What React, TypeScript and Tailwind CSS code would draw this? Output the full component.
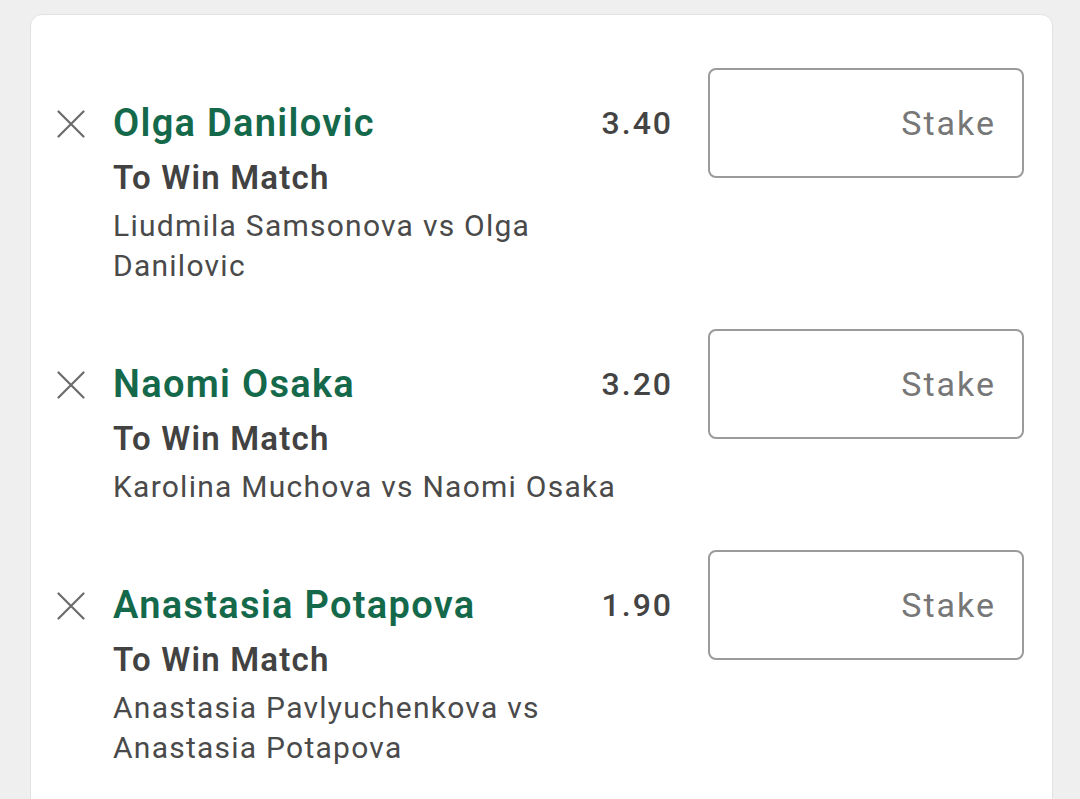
const selections = [
  { name: "Olga Danilovic", market: "To Win Match", event: "Liudmila Samsonova vs Olga Danilovic", odds: "3.40" },
  { name: "Naomi Osaka", market: "To Win Match", event: "Karolina Muchova vs Naomi Osaka", odds: "3.20" },
  { name: "Anastasia Potapova", market: "To Win Match", event: "Anastasia Pavlyuchenkova vs Anastasia Potapova", odds: "1.90" },
];

function CloseIcon() {
  return (
    <svg width="28" height="28" viewBox="0 0 28 28" fill="none" stroke="#6b6b6b" strokeWidth="2.2" strokeLinecap="round">
      <path d="M1.5 1.5 26.5 26.5M26.5 1.5 1.5 26.5" />
    </svg>
  );
}

export default function App() {
  return (
    <main className="min-h-screen bg-[#efefef] pl-[30px] pr-[27px] pt-[14px] font-['Roboto',sans-serif]">
      <section className="min-h-[820px] rounded-t-[12px] border border-[#e2e2e2] bg-white pb-10 pl-[26px] pr-[28px] pt-[53px]">
        <div className="flex flex-col gap-[43px]">
          {selections.map((s) => (
            <div className="flex items-start" key={s.name}>
              <button className="mt-[42px] shrink-0" aria-label="Remove selection">
                <CloseIcon />
              </button>
              <div className="ml-[28px] flex-1 pt-[31px]">
                <div className="flex items-center justify-between">
                  <span className="text-[38px] font-semibold leading-[48px] tracking-[1.3px] text-[#15694b]">{s.name}</span>
                  <span className="-mr-[2px] text-[32px] font-medium leading-[48px] tracking-[2px] text-[#444]">{s.odds}</span>
                </div>
                <div className="mt-[11px] text-[33px] font-semibold leading-[40px] tracking-[1.2px] text-[#424242]">{s.market}</div>
                <div className="mt-2 max-w-[530px] text-[30px] leading-[40px] tracking-[1.25px] text-[#4a4a4a]">{s.event}</div>
              </div>
              <input
                className="ml-[37px] h-[110px] w-[316px] shrink-0 rounded-[8px] border-2 border-[#9b9b9b] bg-white pr-[26px] text-right text-[34px] tracking-[2px] text-[#444] outline-none placeholder:text-[#777]"
                placeholder="Stake"
              />
            </div>
          ))}
        </div>
      </section>
    </main>
  );
}
